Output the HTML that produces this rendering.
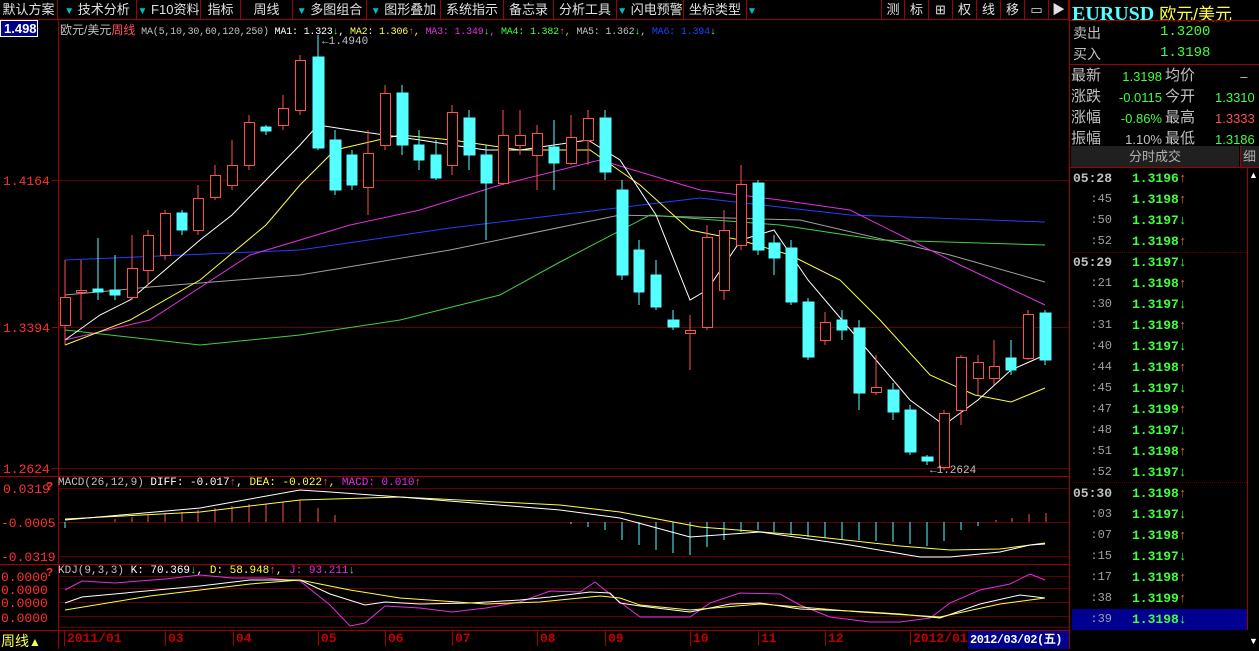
<!DOCTYPE html>
<html><head><meta charset="utf-8"><style>
*{margin:0;padding:0;box-sizing:border-box}
body{width:1259px;height:649px;background:#000;overflow:hidden;font-family:"Liberation Sans","Noto Sans CJK SC",sans-serif;position:relative;color:#c0c0c0}
.t{position:absolute;white-space:nowrap}
.tb{position:absolute;top:0;height:19px;font-size:13px;color:#e0e0e0;line-height:19px;border-right:1px solid #a00000;text-align:center}
.ar{color:#00c0c0;font-size:10px}
.rp{position:absolute;left:1069px;font-size:14px;white-space:nowrap}
.g{color:#40ff40}.r{color:#ff5050}
.row{position:absolute;left:1072px;width:175px;height:21px;font-size:13px;font-family:"Liberation Mono",monospace;font-weight:bold}
.row .tm{position:absolute;right:135px;top:3px;color:#a0a0a0;font-weight:normal;font-size:12px}
.row .tm.b{font-weight:bold;font-size:13px;color:#c0c0c0}
.row .p{position:absolute;left:60px;top:3px;color:#40ff40}
</style></head><body>
<div class="tb" style="left:0;width:58px">默认方案</div>
<div class="tb" style="left:58px;width:79px"><span class="ar">▼</span> 技术分析</div>
<div class="tb" style="left:137px;width:64px"><span class="ar">▼</span> F10资料</div>
<div class="tb" style="left:201px;width:40px">指标</div>
<div class="tb" style="left:241px;width:52px">周线</div>
<div class="tb" style="left:293px;width:74px"><span class="ar">▼</span> 多图组合</div>
<div class="tb" style="left:367px;width:74px"><span class="ar">▼</span> 图形叠加</div>
<div class="tb" style="left:441px;width:63px">系统指示</div>
<div class="tb" style="left:504px;width:50px">备忘录</div>
<div class="tb" style="left:554px;width:63px">分析工具</div>
<div class="tb" style="left:617px;width:67px"><span class="ar">▼</span> 闪电预警</div>
<div class="tb" style="left:684px;width:63px">坐标类型</div>
<div class="tb" style="left:747px;width:10px;border:none"><span class="ar">▼</span></div>
<div class="tb" style="left:881px;width:24px;border-left:1px solid #a00000">测</div>
<div class="tb" style="left:905px;width:24px">标</div>
<div class="tb" style="left:929px;width:24px">⊞</div>
<div class="tb" style="left:953px;width:24px">权</div>
<div class="tb" style="left:977px;width:24px">线</div>
<div class="tb" style="left:1001px;width:24px">移</div>
<div class="tb" style="left:1025px;width:24px">▭</div>
<div class="tb" style="left:1049px;width:20px">▶</div>
<div style="position:absolute;left:0;top:19px;width:1069px;height:1px;background:#a00000"></div>
<div style="position:absolute;left:1069px;top:0;width:1px;height:649px;background:#a00000"></div>
<div style="position:absolute;left:0;top:20px;width:38px;height:17px;background:#000090;border:1px solid #fff;color:#fff;font-size:13px;font-weight:bold;padding-left:3px;line-height:15px">1.498</div>
<svg width="1259" height="649" style="position:absolute;left:0;top:0" font-family="Liberation Mono,monospace">
<g stroke="#a00000" stroke-width="1" fill="none">
<line x1="58.5" y1="20" x2="58.5" y2="649"/>
<line x1="0" y1="476.5" x2="1069" y2="476.5"/>
<line x1="0" y1="564.5" x2="1069" y2="564.5"/>
<line x1="0" y1="630.5" x2="1069" y2="630.5"/>
<line x1="59" y1="180.5" x2="1069" y2="180.5" stroke="#600000"/>
<line x1="59" y1="327.5" x2="1069" y2="327.5" stroke="#600000"/>
<line x1="59" y1="468.5" x2="1069" y2="468.5" stroke="#600000"/>
<line x1="59" y1="488.5" x2="1069" y2="488.5" stroke="#600000"/>
<line x1="59" y1="522.5" x2="1069" y2="522.5" stroke="#600000"/>
<line x1="59" y1="556.5" x2="1069" y2="556.5" stroke="#600000"/>
<line x1="59" y1="576.5" x2="1069" y2="576.5" stroke="#600000"/>
<line x1="59" y1="588.5" x2="1069" y2="588.5" stroke="#600000"/>
<line x1="59" y1="602.5" x2="1069" y2="602.5" stroke="#600000"/>
<line x1="59" y1="616.5" x2="1069" y2="616.5" stroke="#600000"/>
<line x1="59" y1="627.5" x2="1069" y2="627.5" stroke="#600000"/>
<line x1="52" y1="180.5" x2="58" y2="180.5"/><line x1="52" y1="327.5" x2="58" y2="327.5"/>
<line x1="52" y1="468.5" x2="58" y2="468.5"/>
</g>
<g font-size="13" fill="#ff3030">
<text x="3" y="185">1.4164</text><text x="3" y="332">1.3394</text><text x="3" y="473">1.2624</text>
<text x="3" y="493">0.0319</text><text x="1" y="527">-0.0005</text><text x="1" y="561">-0.0319</text>
<text x="1" y="581">0.0000</text><text x="1" y="607">0.0000</text><text x="1" y="622">0.0000</text><text x="1" y="594">0.0000</text>
</g>
<text x="46" y="490" font-size="12" fill="#ff3030" font-weight="bold">?</text>
<text x="46" y="576" font-size="12" fill="#ff3030" font-weight="bold">?</text>
<g fill="none" stroke-width="1">
<polyline stroke="#a0a0a0" points="65,295 150,287 300,275 450,250 620,215 800,220 950,255 1045,282"/>
<polyline stroke="#2040ff" points="65,260 300,250 450,228 600,210 700,198 850,215 1045,222"/>
<polyline stroke="#40d040" points="65,330 200,345 300,335 400,320 500,295 560,262 650,215 780,225 880,240 1045,245"/>
<polyline stroke="#e030e0" points="65,340 150,320 250,255 350,225 420,210 500,185 600,160 650,175 700,190 780,200 850,210 900,235 960,265 1045,305"/>
<polyline stroke="#ffff40" points="65,345 130,320 200,280 266,225 300,185 335,150 400,135 452,140 520,150 590,150 640,185 690,230 740,240 790,255 840,280 880,320 930,375 975,395 1011,402 1045,388"/>
<polyline stroke="#ffffff" points="65,340 100,315 130,300 165,270 200,240 232,215 266,180 300,145 318,125 350,130 385,135 420,140 452,145 486,150 520,150 554,145 588,140 620,160 656,215 690,300 707,290 741,240 774,230 808,280 842,320 876,360 910,400 944,425 978,400 1011,370 1045,355"/>
</g>
<g stroke="#ff5050" fill="#000" stroke-width="1">
<line x1="65" y1="260" x2="65" y2="345"/><rect x="60.5" y="297.5" width="10" height="28"/>
<line x1="81" y1="260" x2="81" y2="320"/><rect x="76.5" y="290.5" width="10" height="2"/>
<line x1="132" y1="235" x2="132" y2="300"/><rect x="127.5" y="268.5" width="10" height="29"/>
<line x1="148" y1="230" x2="148" y2="285"/><rect x="143.5" y="235.5" width="10" height="35"/>
<line x1="165" y1="210" x2="165" y2="260"/><rect x="160.5" y="213.5" width="10" height="42"/>
<line x1="198" y1="185" x2="198" y2="235"/><rect x="193.5" y="198.5" width="10" height="32"/>
<line x1="215" y1="165" x2="215" y2="200"/><rect x="210.5" y="175.5" width="10" height="22"/>
<line x1="232" y1="140" x2="232" y2="190"/><rect x="227.5" y="165.5" width="10" height="20"/>
<line x1="249" y1="115" x2="249" y2="170"/><rect x="244.5" y="122.5" width="10" height="43"/>
<line x1="283" y1="95" x2="283" y2="130"/><rect x="278.5" y="108.5" width="10" height="17"/>
<line x1="300" y1="55" x2="300" y2="115"/><rect x="295.5" y="60.5" width="10" height="50"/>
<line x1="368" y1="130" x2="368" y2="215"/><rect x="363.5" y="153.5" width="10" height="34"/>
<line x1="385" y1="85" x2="385" y2="150"/><rect x="380.5" y="93.5" width="10" height="52"/>
<line x1="452" y1="105" x2="452" y2="175"/><rect x="447.5" y="112.5" width="10" height="53"/>
<line x1="503" y1="110" x2="503" y2="185"/><rect x="498.5" y="135.5" width="10" height="48"/>
<line x1="520" y1="110" x2="520" y2="155"/><rect x="515.5" y="135.5" width="10" height="10"/>
<line x1="537" y1="125" x2="537" y2="190"/><rect x="532.5" y="133.5" width="10" height="22"/>
<line x1="571" y1="115" x2="571" y2="165"/><rect x="566.5" y="137.5" width="10" height="26"/>
<line x1="588" y1="110" x2="588" y2="165"/><rect x="583.5" y="118.5" width="10" height="22"/>
<line x1="690" y1="315" x2="690" y2="370"/><rect x="685.5" y="330.5" width="10" height="3"/>
<line x1="707" y1="225" x2="707" y2="330"/><rect x="702.5" y="237.5" width="10" height="90"/>
<line x1="724" y1="210" x2="724" y2="300"/><rect x="719.5" y="230.5" width="10" height="60"/>
<line x1="741" y1="165" x2="741" y2="250"/><rect x="736.5" y="184.5" width="10" height="61"/>
<line x1="825" y1="312" x2="825" y2="345"/><rect x="820.5" y="322.5" width="10" height="18"/>
<line x1="876" y1="355" x2="876" y2="395"/><rect x="871.5" y="387.5" width="10" height="5"/>
<line x1="944" y1="410" x2="944" y2="470"/><rect x="939.5" y="413.5" width="10" height="54"/>
<line x1="961" y1="355" x2="961" y2="425"/><rect x="956.5" y="357.5" width="10" height="53"/>
<line x1="978" y1="355" x2="978" y2="395"/><rect x="973.5" y="362.5" width="10" height="16"/>
<line x1="994" y1="340" x2="994" y2="385"/><rect x="989.5" y="366.5" width="10" height="12"/>
<line x1="1028" y1="310" x2="1028" y2="360"/><rect x="1023.5" y="314.5" width="10" height="44"/>
</g>
<g stroke="#54ffff" fill="#54ffff">
<line x1="98" y1="238" x2="98" y2="300"/><rect x="93" y="289" width="10" height="3"/>
<line x1="115" y1="255" x2="115" y2="300"/><rect x="110" y="290" width="10" height="5"/>
<line x1="182" y1="210" x2="182" y2="235"/><rect x="177" y="213" width="10" height="17"/>
<line x1="266" y1="125" x2="266" y2="135"/><rect x="261" y="127" width="10" height="4"/>
<line x1="318" y1="35" x2="318" y2="150"/><rect x="313" y="57" width="11" height="91"/>
<line x1="335" y1="130" x2="335" y2="195"/><rect x="330" y="140" width="11" height="50"/>
<line x1="352" y1="150" x2="352" y2="190"/><rect x="347" y="155" width="10" height="30"/>
<line x1="402" y1="85" x2="402" y2="155"/><rect x="397" y="93" width="11" height="52"/>
<line x1="419" y1="130" x2="419" y2="170"/><rect x="414" y="145" width="10" height="15"/>
<line x1="436" y1="140" x2="436" y2="180"/><rect x="431" y="155" width="10" height="23"/>
<line x1="469" y1="110" x2="469" y2="170"/><rect x="464" y="118" width="11" height="37"/>
<line x1="486" y1="145" x2="486" y2="240"/><rect x="481" y="155" width="11" height="28"/>
<line x1="554" y1="120" x2="554" y2="190"/><rect x="549" y="147" width="10" height="16"/>
<line x1="605" y1="110" x2="605" y2="180"/><rect x="600" y="118" width="11" height="54"/>
<line x1="622" y1="180" x2="622" y2="280"/><rect x="617" y="190" width="11" height="85"/>
<line x1="639" y1="240" x2="639" y2="305"/><rect x="634" y="250" width="10" height="42"/>
<line x1="656" y1="260" x2="656" y2="310"/><rect x="651" y="275" width="10" height="32"/>
<line x1="673" y1="310" x2="673" y2="330"/><rect x="668" y="320" width="11" height="7"/>
<line x1="758" y1="180" x2="758" y2="255"/><rect x="753" y="183" width="11" height="67"/>
<line x1="774" y1="235" x2="774" y2="275"/><rect x="769" y="243" width="11" height="15"/>
<line x1="791" y1="240" x2="791" y2="305"/><rect x="786" y="248" width="11" height="54"/>
<line x1="808" y1="298" x2="808" y2="360"/><rect x="803" y="302" width="11" height="55"/>
<line x1="842" y1="310" x2="842" y2="340"/><rect x="837" y="320" width="10" height="10"/>
<line x1="859" y1="320" x2="859" y2="410"/><rect x="854" y="328" width="11" height="65"/>
<line x1="893" y1="383" x2="893" y2="420"/><rect x="888" y="390" width="11" height="22"/>
<line x1="910" y1="405" x2="910" y2="455"/><rect x="905" y="410" width="11" height="42"/>
<line x1="927" y1="455" x2="927" y2="465"/><rect x="922" y="457" width="11" height="4"/>
<line x1="1011" y1="340" x2="1011" y2="375"/><rect x="1006" y="358" width="10" height="12"/>
<line x1="1045" y1="310" x2="1045" y2="365"/><rect x="1040" y="313" width="11" height="47"/>
</g>
<g font-size="11" fill="#c0c0c0"><text x="322" y="44">←1.4940</text><text x="930" y="473">←1.2624</text></g>
<g stroke-width="1">
<g stroke="#ff5050">
<line x1="115" y1="522" x2="115" y2="519"/><line x1="132" y1="522" x2="132" y2="517"/><line x1="148" y1="522" x2="148" y2="515"/><line x1="165" y1="522" x2="165" y2="513"/><line x1="182" y1="522" x2="182" y2="512"/><line x1="198" y1="522" x2="198" y2="510"/><line x1="215" y1="522" x2="215" y2="508"/><line x1="232" y1="522" x2="232" y2="506"/><line x1="249" y1="522" x2="249" y2="504"/><line x1="266" y1="522" x2="266" y2="504"/><line x1="283" y1="522" x2="283" y2="502"/><line x1="300" y1="522" x2="300" y2="500"/><line x1="318" y1="522" x2="318" y2="508"/><line x1="335" y1="522" x2="335" y2="515"/><line x1="996" y1="522" x2="996" y2="520"/><line x1="1012" y1="522" x2="1012" y2="518"/><line x1="1029" y1="522" x2="1029" y2="514"/><line x1="1046" y1="522" x2="1046" y2="513"/>
</g>
<g stroke="#54ffff">
<line x1="65" y1="522" x2="65" y2="528"/><line x1="571" y1="522" x2="571" y2="524"/><line x1="588" y1="522" x2="588" y2="527"/><line x1="605" y1="522" x2="605" y2="530"/><line x1="622" y1="522" x2="622" y2="540"/><line x1="639" y1="522" x2="639" y2="545"/><line x1="656" y1="522" x2="656" y2="550"/><line x1="673" y1="522" x2="673" y2="553"/><line x1="690" y1="522" x2="690" y2="555"/><line x1="707" y1="522" x2="707" y2="547"/><line x1="724" y1="522" x2="724" y2="540"/><line x1="741" y1="522" x2="741" y2="532"/><line x1="758" y1="522" x2="758" y2="530"/><line x1="774" y1="522" x2="774" y2="532"/><line x1="791" y1="522" x2="791" y2="535"/><line x1="808" y1="522" x2="808" y2="537"/><line x1="825" y1="522" x2="825" y2="538"/><line x1="842" y1="522" x2="842" y2="539"/><line x1="859" y1="522" x2="859" y2="540"/><line x1="876" y1="522" x2="876" y2="541"/><line x1="893" y1="522" x2="893" y2="542"/><line x1="910" y1="522" x2="910" y2="544"/><line x1="927" y1="522" x2="927" y2="546"/><line x1="944" y1="522" x2="944" y2="541"/><line x1="961" y1="522" x2="961" y2="530"/><line x1="978" y1="522" x2="978" y2="526"/>
</g>
<polyline fill="none" stroke="#ffff40" points="65,519 200,512 300,500 400,497 560,505 620,512 700,527 800,535 900,546 950,550 1000,549 1045,543"/>
<polyline fill="none" stroke="#ffffff" points="65,520 200,508 300,490 330,492 400,497 560,510 620,518 690,537 760,532 850,545 920,557 950,557 1000,552 1030,545 1045,544"/>
</g>
<g fill="none">
<polyline stroke="#e030e0" points="65,590 82,581 115,583 165,579 200,575 232,578 265,578 300,581 330,605 350,626 365,623 385,606 420,608 452,612 486,608 520,602 550,591 580,592 595,582 610,594 620,602 640,617 690,617 710,603 740,593 780,594 800,605 830,617 870,622 900,622 930,618 950,603 980,590 1010,584 1030,574 1045,580"/>
<polyline stroke="#ffffff" points="65,603 82,597 200,586 250,580 300,580 330,594 365,605 385,602 420,604 470,603 520,600 550,597 590,592 610,593 620,603 640,606 690,612 730,604 760,603 800,609 850,611 900,614 940,618 980,604 1020,595 1045,598"/>
<polyline stroke="#ffff40" points="65,610 150,596 250,584 300,580 350,590 400,598 486,604 540,602 600,596 620,598 640,605 690,610 760,604 800,607 860,612 940,617 1000,604 1045,598"/>
</g>
</svg>
<div class="t" style="left:60px;top:21px;font-size:10px;letter-spacing:-0.2px;font-family:'Liberation Mono','Noto Sans CJK SC',monospace;color:#c0c0c0"><span style="font-size:12px;letter-spacing:0;font-family:'Liberation Sans','Noto Sans CJK SC',sans-serif">欧元/美元</span><span style="color:#ff5050;font-size:12px;letter-spacing:0;font-family:'Liberation Sans','Noto Sans CJK SC',sans-serif">周线</span> MA(5,10,30,60,120,250) <span style="color:#fff">MA1: 1.323<span class="g">↓</span>,</span> <span style="color:#ffff40">MA2: 1.306<span class="r">↑</span>,</span> <span style="color:#e030e0">MA3: 1.349<span class="g">↓</span>,</span> <span style="color:#40ff40">MA4: 1.382<span class="r">↑</span>,</span> <span>MA5: 1.362<span class="g">↓</span>,</span> <span style="color:#2040ff">MA6: 1.394<span class="g">↓</span></span></div>
<div class="t" style="left:58px;top:477px;font-size:11px;font-family:'Liberation Mono',monospace;color:#c0c0c0">MACD(26,12,9) <span style="color:#fff">DIFF: -0.017<span class="r">↑</span>,</span> <span style="color:#ffff40">DEA: -0.022<span class="r">↑</span>,</span> <span style="color:#e030e0">MACD: 0.010<span class="r">↑</span></span></div>
<div class="t" style="left:58px;top:565px;font-size:11px;font-family:'Liberation Mono',monospace;color:#c0c0c0">KDJ(9,3,3) <span style="color:#fff">K: 70.369<span class="g">↓</span>,</span> <span style="color:#ffff40">D: 58.948<span class="r">↑</span>,</span> <span style="color:#e030e0">J: 93.211<span class="g">↓</span></span></div>
<div class="t" style="left:1px;top:631px;font-size:14px;color:#ffff40">周线<span style="font-size:12px">▲</span></div>
<div class="t" style="left:0;top:631px;width:1069px;height:18px;font-size:13px;font-weight:bold;color:#c00000;font-family:'Liberation Mono',monospace">
<span class="t" style="left:64px;border-left:1px solid #a00000;padding-left:2px">2011/01</span>
<span class="t" style="left:165px;border-left:1px solid #a00000;padding-left:2px">03</span>
<span class="t" style="left:233px;border-left:1px solid #a00000;padding-left:2px">04</span>
<span class="t" style="left:318px;border-left:1px solid #a00000;padding-left:2px">05</span>
<span class="t" style="left:385px;border-left:1px solid #a00000;padding-left:2px">06</span>
<span class="t" style="left:452px;border-left:1px solid #a00000;padding-left:2px">07</span>
<span class="t" style="left:537px;border-left:1px solid #a00000;padding-left:2px">08</span>
<span class="t" style="left:605px;border-left:1px solid #a00000;padding-left:2px">09</span>
<span class="t" style="left:690px;border-left:1px solid #a00000;padding-left:2px">10</span>
<span class="t" style="left:758px;border-left:1px solid #a00000;padding-left:2px">11</span>
<span class="t" style="left:825px;border-left:1px solid #a00000;padding-left:2px">12</span>
<span class="t" style="left:910px;border-left:1px solid #a00000;padding-left:2px">2012/01</span>
<span class="t" style="left:968px;top:0;width:101px;height:18px;background:#000090;color:#fff;padding-left:2px;font-size:12px;letter-spacing:-0.5px;line-height:18px">2012/03/02(五)</span>
</div>
<div class="rp" style="left:1072px;top:0;font-size:20px;font-weight:bold;font-family:'Liberation Serif',serif;color:#54ffff">EURUSD <span style="color:#ffff40;font-family:'Liberation Sans','Noto Sans CJK SC',sans-serif;font-size:17px;font-weight:normal">欧元/美元</span></div>
<div style="position:absolute;left:1069px;top:20px;width:190px;height:1px;background:#a00000"></div>
<div class="rp" style="left:1073px;top:23px">卖出</div><div class="rp g" style="left:1160px;top:24px;font-family:'Liberation Mono',monospace;font-size:14px">1.3200</div>
<div class="rp" style="left:1073px;top:44px">买入</div><div class="rp g" style="left:1160px;top:45px;font-family:'Liberation Mono',monospace;font-size:14px">1.3198</div>
<div style="position:absolute;left:1069px;top:64px;width:190px;height:1px;background:#a00000"></div>
<div class="rp" style="left:1071px;top:65px;font-size:15px;line-height:21px">最新<br>涨跌<br>涨幅<br>振幅</div>
<div class="rp" style="left:1105px;top:66px;font-size:13px;line-height:21px;font-family:'Liberation Sans',sans-serif;width:57px;text-align:right"><span class="g">1.3198</span><br><span class="g">-0.0115</span><br><span class="g">-0.86%</span><br><span>1.10%</span></div>
<div class="rp" style="left:1165px;top:65px;font-size:15px;line-height:21px">均价<br>今开<br>最高<br>最低</div>
<div class="rp" style="left:1215px;top:66px;font-size:13px;line-height:21px;font-family:'Liberation Sans',sans-serif"><span>&nbsp;&nbsp;&nbsp;&nbsp;&nbsp;&nbsp;&nbsp;–</span><br><span class="g">1.3310</span><br><span class="r">1.3333</span><br><span class="g">1.3186</span></div>
<div style="position:absolute;left:1071px;top:146px;width:168px;height:21px;background:#202020;color:#b0b0b0;font-size:13px;text-align:center;line-height:21px">分时成交</div>
<div style="position:absolute;left:1240px;top:146px;width:19px;height:21px;background:#202020;color:#b0b0b0;font-size:13px;line-height:21px;border-left:1px solid #a00000;padding-left:2px">细</div>
<div style="position:absolute;left:1069px;top:167px;width:190px;height:1px;background:#a00000"></div>
<div style="position:absolute;left:1247px;top:168px;width:1px;height:462px;background:#a00000"></div>
<div style="position:absolute;left:1072px;top:609px;width:175px;height:21px;background:#000090"></div>
<div style="position:absolute;left:1072px;top:252px;width:175px;border-top:1px dotted #600000"></div>
<div style="position:absolute;left:1072px;top:482px;width:175px;border-top:1px dotted #600000"></div>
<div class="row" style="top:168px"><span class="tm b">05:28</span><span class="p">1.3196<span class="r">↑</span></span></div>
<div class="row" style="top:189px"><span class="tm">:45</span><span class="p">1.3198<span class="r">↑</span></span></div>
<div class="row" style="top:210px"><span class="tm">:50</span><span class="p">1.3197<span class="g">↓</span></span></div>
<div class="row" style="top:231px"><span class="tm">:52</span><span class="p">1.3198<span class="r">↑</span></span></div>
<div class="row" style="top:252px"><span class="tm b">05:29</span><span class="p">1.3197<span class="g">↓</span></span></div>
<div class="row" style="top:273px"><span class="tm">:21</span><span class="p">1.3198<span class="r">↑</span></span></div>
<div class="row" style="top:294px"><span class="tm">:30</span><span class="p">1.3197<span class="g">↓</span></span></div>
<div class="row" style="top:315px"><span class="tm">:31</span><span class="p">1.3198<span class="r">↑</span></span></div>
<div class="row" style="top:336px"><span class="tm">:40</span><span class="p">1.3197<span class="g">↓</span></span></div>
<div class="row" style="top:357px"><span class="tm">:44</span><span class="p">1.3198<span class="r">↑</span></span></div>
<div class="row" style="top:378px"><span class="tm">:45</span><span class="p">1.3197<span class="g">↓</span></span></div>
<div class="row" style="top:399px"><span class="tm">:47</span><span class="p">1.3199<span class="r">↑</span></span></div>
<div class="row" style="top:420px"><span class="tm">:48</span><span class="p">1.3197<span class="g">↓</span></span></div>
<div class="row" style="top:441px"><span class="tm">:51</span><span class="p">1.3198<span class="r">↑</span></span></div>
<div class="row" style="top:462px"><span class="tm">:52</span><span class="p">1.3197<span class="g">↓</span></span></div>
<div class="row" style="top:483px"><span class="tm b">05:30</span><span class="p">1.3198<span class="r">↑</span></span></div>
<div class="row" style="top:504px"><span class="tm">:03</span><span class="p">1.3197<span class="g">↓</span></span></div>
<div class="row" style="top:525px"><span class="tm">:07</span><span class="p">1.3198<span class="r">↑</span></span></div>
<div class="row" style="top:546px"><span class="tm">:15</span><span class="p">1.3197<span class="g">↓</span></span></div>
<div class="row" style="top:567px"><span class="tm">:17</span><span class="p">1.3198<span class="r">↑</span></span></div>
<div class="row" style="top:588px"><span class="tm">:38</span><span class="p">1.3199<span class="r">↑</span></span></div>
<div class="row" style="top:609px"><span class="tm">:39</span><span class="p">1.3198<span class="g">↓</span></span></div>
<div class="t" style="left:1249px;top:170px;font-size:9px;color:#fff">▲</div>
<div class="t" style="left:1249px;top:636px;font-size:9px;color:#fff">▼</div>
</body></html>
